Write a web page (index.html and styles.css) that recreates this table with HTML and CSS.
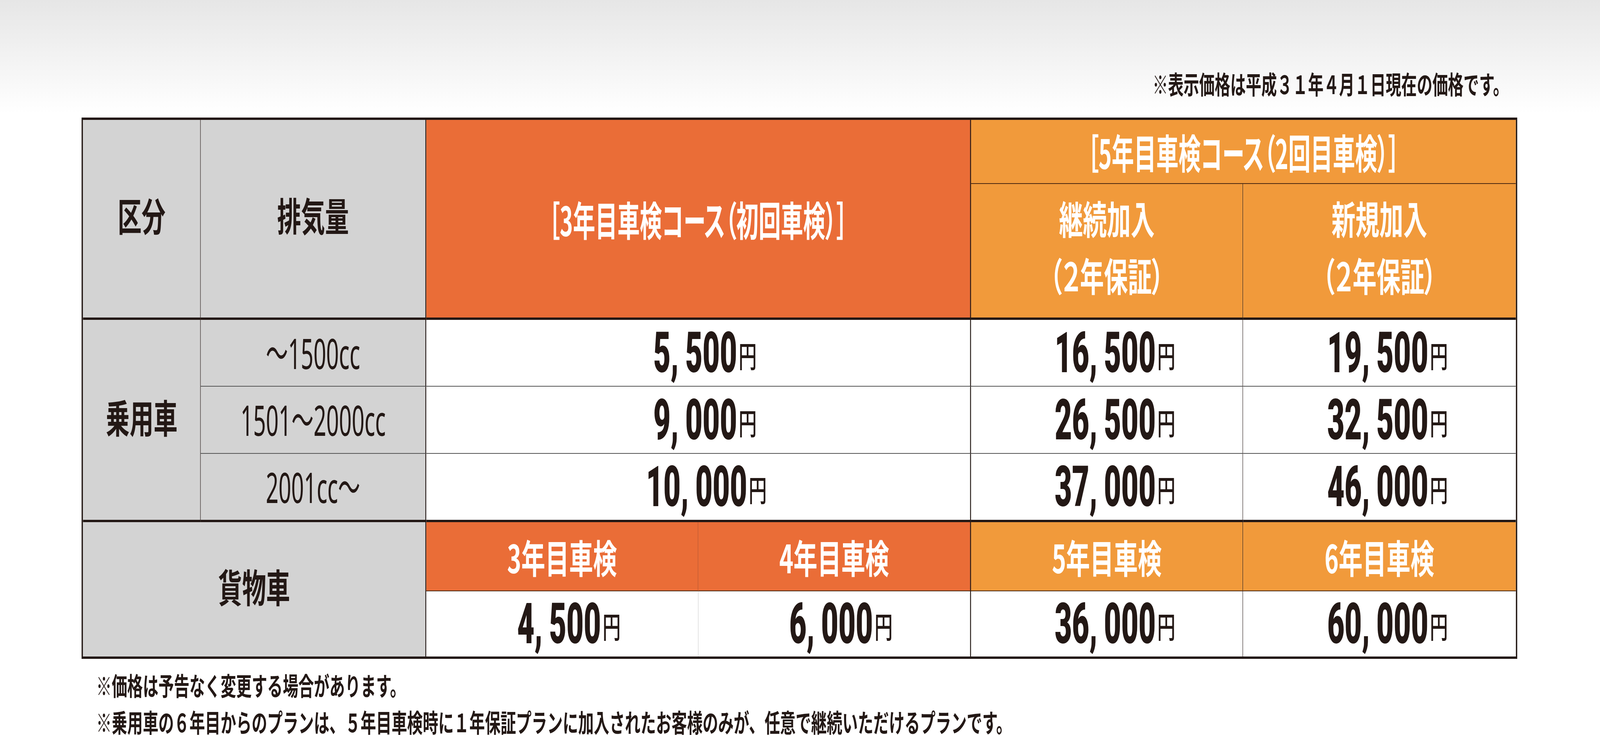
FILE: index.html
```html
<!DOCTYPE html>
<html lang="ja">
<head>
<meta charset="utf-8">
<title>車検コース価格表</title>
<link rel="stylesheet" href="styles.css">
</head>
<body>
<div class="page">
  <p class="note">※表示価格は平成３１年４月１日現在の価格です。</p>

  <div class="price-table">
    <div class="cell gray hd lift-l rs2 br-t bb-k">区分</div>
    <div class="cell gray hd lift-l rs2 br-k bb-k">排気量</div>
    <div class="cell orange cs2 rs2 br-k bb-k"><span class="course">［3年目車検コース（初回車検）］</span></div>
    <div class="cell lorange cs2 bb-b"><span class="course">［5年目車検コース（2回目車検）］</span></div>
    <div class="cell lorange sub br-t bb-k">継続加入<br>（２年保証）</div>
    <div class="cell lorange sub bb-k">新規加入<br>（２年保証）</div>

    <div class="cell gray hd lift-m rs3 br-t bb-k">乗用車</div>
    <div class="cell gray br-k bb-g"><span class="cc">～1500cc</span></div>
    <div class="cell white cs2 br-k bb-g"><span class="num">5<span class="cm">,</span>500</span><span class="yen">円</span></div>
    <div class="cell white br-t bb-g"><span class="num">16<span class="cm">,</span>500</span><span class="yen">円</span></div>
    <div class="cell white bb-g"><span class="num">19<span class="cm">,</span>500</span><span class="yen">円</span></div>

    <div class="cell gray br-k bb-g"><span class="cc">1501～2000cc</span></div>
    <div class="cell white cs2 br-k bb-g"><span class="num">9<span class="cm">,</span>000</span><span class="yen">円</span></div>
    <div class="cell white br-t bb-g"><span class="num">26<span class="cm">,</span>500</span><span class="yen">円</span></div>
    <div class="cell white bb-g"><span class="num">32<span class="cm">,</span>500</span><span class="yen">円</span></div>

    <div class="cell gray br-k bb-k"><span class="cc">2001cc～</span></div>
    <div class="cell white cs2 br-k bb-k"><span class="num">10<span class="cm">,</span>000</span><span class="yen">円</span></div>
    <div class="cell white br-t bb-k"><span class="num">37<span class="cm">,</span>000</span><span class="yen">円</span></div>
    <div class="cell white bb-k"><span class="num">46<span class="cm">,</span>000</span><span class="yen">円</span></div>

    <div class="cell gray hd lift-m cs2 rs2 br-k">貨物車</div>
    <div class="cell orange yr br-o bb-b">3年目車検</div>
    <div class="cell orange yr br-k bb-b">4年目車検</div>
    <div class="cell lorange yr br-t bb-b">5年目車検</div>
    <div class="cell lorange yr bb-b">6年目車検</div>

    <div class="cell white br-g"><span class="num">4<span class="cm">,</span>500</span><span class="yen">円</span></div>
    <div class="cell white br-k"><span class="num">6<span class="cm">,</span>000</span><span class="yen">円</span></div>
    <div class="cell white br-t"><span class="num">36<span class="cm">,</span>000</span><span class="yen">円</span></div>
    <div class="cell white"><span class="num">60<span class="cm">,</span>000</span><span class="yen">円</span></div>
  </div>

  <div class="notes">
    <p>※価格は予告なく変更する場合があります。</p>
    <p>※乗用車の６年目からのプランは、５年目車検時に１年保証プランに加入されたお客様のみが、任意で継続いただけるプランです。</p>
  </div>
</div>
</body>
</html>
```

FILE: styles.css
```css
html, body {
  margin: 0;
  padding: 0;
}

html {
  overflow: hidden;
}

body {
  min-height: 100vh;
  background: #ffffff linear-gradient(#e6e6e6 0px, #ffffff 290px) no-repeat;
  font-family: "Noto Sans CJK JP", "Noto Sans", sans-serif;
  color: #231815;
}

/* The layout is drawn for a 6688px wide window; it is squeezed
   horizontally when the actual viewport is narrower. */
.page {
  width: 6001px;
  padding: 181px 0 0 341px;
  transform-origin: 0 0;
  transform: scaleX(min(1, tan(atan2(100vw, 6688px))));
}

.note {
  margin: 0;
  font-size: 65px;
  line-height: 64px;
  font-weight: 700;
  text-align: right;
  padding-right: 36px;
}

.price-table {
  margin-top: 56px;
  width: 6001px;
  box-sizing: border-box;
  border: 6px solid #231815;
  display: grid;
  grid-template-columns: 492px 943px 1137px 1140px 1137px 1140px;
  grid-template-rows: 164px 348px 171px 172px 175px 177px 167px;
}

.cell {
  box-sizing: border-box;
  display: flex;
  align-items: center;
  justify-content: center;
  text-align: center;
  line-height: 1;
}

.cs2 { grid-column: span 2; }
.rs2 { grid-row: span 2; }
.rs3 { grid-row: span 3; }

.gray { background: #d3d3d3; }
.white { background: #ffffff; }
.orange { background: #ea6d37; color: #ffffff; }
.lorange { background: #f19a3b; color: #ffffff; }

/* borders */
.br-t { border-right: 2px solid #231815; }
.br-k { border-right: 4px solid #231815; }
.br-o { border-right: 2px solid #b0502a; }
.br-g { border-right: 1px solid #8a8a8a; }
.bb-k { border-bottom: 6px solid #231815; }
.bb-g { border-bottom: 2px solid #555555; }
.bb-b { border-bottom: 2px solid #4a2812; }

/* header texts */
.hd {
  font-size: 100px;
  font-weight: 700;
}

.lift-l { padding-bottom: 22px; }
.lift-m { padding-bottom: 18px; }

.course {
  display: inline-block;
  font-size: 104px;
  font-weight: 700;
  font-feature-settings: "palt";
  transform: scaleX(0.895);
  white-space: nowrap;
}

.sub {
  flex-direction: column;
  font-size: 100px;
  font-weight: 700;
  line-height: 146px;
  font-feature-settings: "palt";
  padding-bottom: 24px;
}

.yr {
  font-size: 100px;
  font-weight: 700;
  font-feature-settings: "palt";
}

/* displacement */
.cc {
  display: inline-block;
  font-family: "Noto Sans", "Noto Sans CJK JP", sans-serif;
  font-size: 108px;
  font-weight: 400;
  transform: scaleX(0.86);
  white-space: nowrap;
}

/* prices */
.num {
  display: inline-block;
  font-family: Roboto, "Noto Sans", sans-serif;
  font-size: 145px;
  font-weight: 900;
  line-height: 1;
  transform: scaleX(0.86);
  transform-origin: right center;
  white-space: nowrap;
}

.cm {
  margin-right: 0.22em;
}

.yen {
  font-size: 76px;
  font-weight: 500;
  line-height: 1;
  margin-left: 6px;
  align-self: flex-end;
  margin-bottom: 42px;
}

/* footnotes */
.notes {
  margin: 36px 0 0 61px;
  font-size: 65px;
  line-height: 60px;
  font-weight: 700;
}

.notes p {
  margin: 0;
  white-space: nowrap;
}

.notes p + p {
  margin-top: 34px;
}
```
